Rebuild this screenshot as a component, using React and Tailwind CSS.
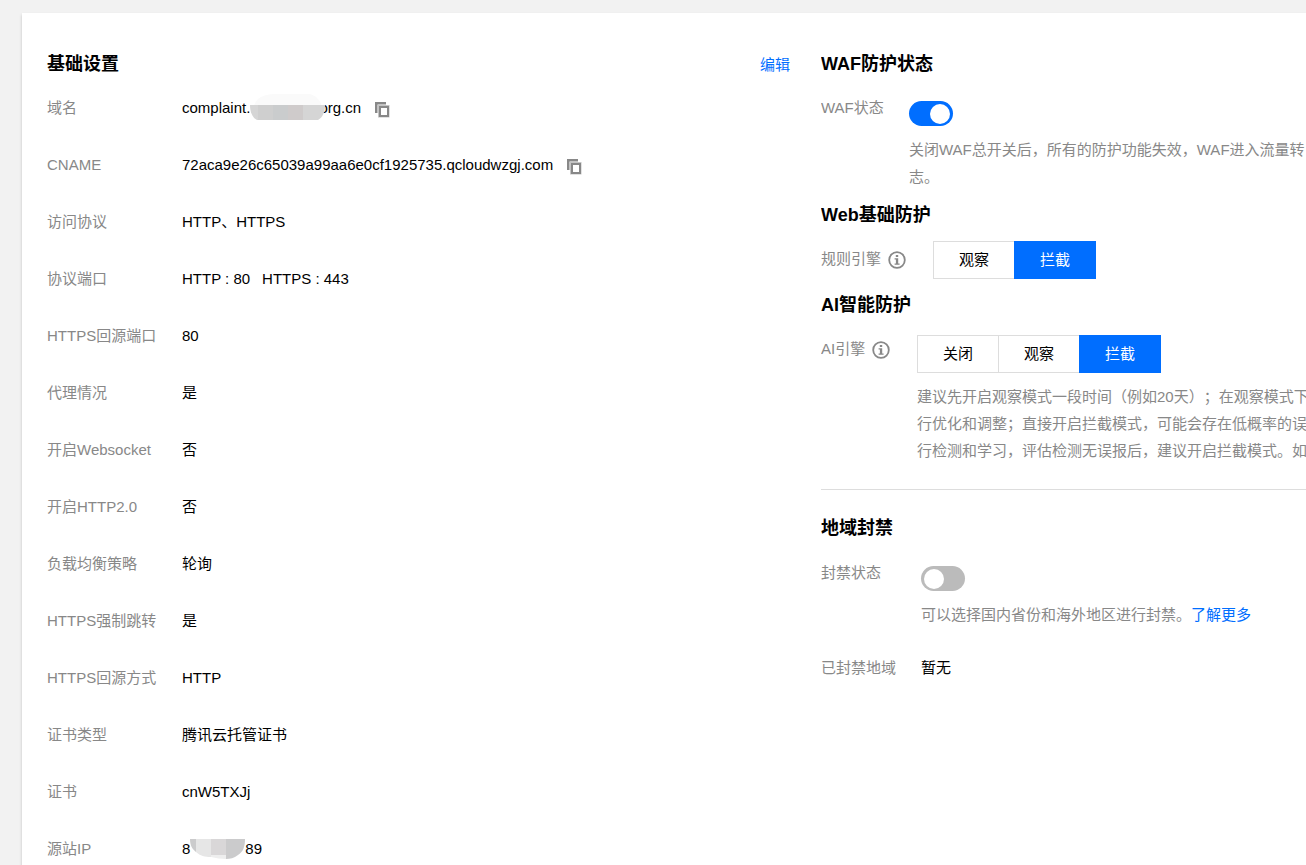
import React, { useState } from 'react';

const LINE = 'text-[15px] leading-[27px]';

function CopyIcon() {
  return (
    <svg width="15" height="16" viewBox="0 0 15 16" fill="none" aria-hidden="true">
      <path d="M0 0H11V2.5H2.5V11H0Z" fill="#888" />
      <path d="M3 3H14.5V15.5H3Z" fill="#c4c4c4" />
      <path d="M4 4H14V15H4Z" fill="#888" />
      <path d="M6 6H12V13H6Z" fill="#fff" />
    </svg>
  );
}

function InfoIcon() {
  return (
    <svg width="18" height="18" viewBox="0 0 18 18" fill="none" aria-hidden="true">
      <circle cx="9" cy="9" r="7.8" stroke="#888" strokeWidth="1.8" />
      <path d="M7.8 4H10.2V6H7.8Z" fill="#888" />
      <path d="M6.6 7.2H10.2V12.4H11.6V13.8H6.6V12.4H7.9V8.6H6.6Z" fill="#888" />
    </svg>
  );
}

function CopyButton({ label }) {
  return (
    <button type="button" aria-label={label} className="ml-[14px] mt-1 cursor-pointer">
      <CopyIcon />
    </button>
  );
}

// grey patch over the hidden part of the domain
function DomainMask() {
  return (
    <svg className="relative -mr-[6px] shrink-0" width="75" height="27" viewBox="0 0 75 27" aria-hidden="true">
      <path d="M4 12C6 4 12 1 23 0H60C67 2 70 7 72 12Z" fill="#fafafa" />
      <path d="M0 11H75C75 18 73 23 68 26H7C3 24 0 19 0 11Z" fill="#d5d5d5" />
      <path d="M8 11H23V26H8Z" fill="#cfcfcf" />
      <path d="M23 11H38V26H23Z" fill="#cacccd" />
      <path d="M38 11H53V26H38Z" fill="#cfcbcb" />
    </svg>
  );
}

function IpMask() {
  return (
    <svg className="shrink-0" width="55" height="20" viewBox="0 0 55 20" aria-hidden="true">
      <path d="M0 0H55C55 8 53 13 48 16C44 19 40 20 36 20V0H6V13C2 10 0 6 0 0Z" fill="#cbcbcc" />
      <path d="M6 0H21V18C15 18 10 17 6 13Z" fill="#e6e6e6" />
      <path d="M21 0H36V16H21Z" fill="#d9d7d8" />
      <path d="M21 16H36V20C31 20 26 19 21 18Z" fill="#eee" />
    </svg>
  );
}

const rows = [
  {
    label: '域名',
    value: (
      <>
        complaint.
        <DomainMask />
        org.cn
        <CopyButton label="复制域名" />
      </>
    ),
  },
  {
    label: 'CNAME',
    value: (
      <>
        72aca9e26c65039a99aa6e0cf1925735.qcloudwzgj.com
        <CopyButton label="复制 CNAME" />
      </>
    ),
  },
  { label: '访问协议', value: 'HTTP、HTTPS' },
  {
    label: '协议端口',
    value: (
      <>
        <span>HTTP : 80</span>
        <span className="ml-3">HTTPS : 443</span>
      </>
    ),
  },
  { label: 'HTTPS回源端口', value: '80' },
  { label: '代理情况', value: '是' },
  { label: '开启Websocket', value: '否' },
  { label: '开启HTTP2.0', value: '否' },
  { label: '负载均衡策略', value: '轮询' },
  { label: 'HTTPS强制跳转', value: '是' },
  { label: 'HTTPS回源方式', value: 'HTTP' },
  { label: '证书类型', value: '腾讯云托管证书' },
  { label: '证书', value: 'cnW5TXJj' },
  {
    label: '源站IP',
    value: (
      <>
        8<IpMask />
        89
      </>
    ),
  },
];

function Title({ children }) {
  return <h2 className="text-lg leading-[27px] font-bold text-black">{children}</h2>;
}

function Switch({ id, defaultChecked }) {
  return (
    <input
      id={id}
      type="checkbox"
      role="switch"
      defaultChecked={defaultChecked}
      className="block h-[25px] w-11 cursor-pointer appearance-none rounded-full bg-[#bbb] p-[3px] before:block before:size-5 before:rounded-full before:bg-white checked:bg-[#006eff] checked:before:ml-[18px]"
    />
  );
}

function Segment({ labelId, options, initial }) {
  const [active, setActive] = useState(initial);
  return (
    <div role="group" aria-labelledby={labelId} className="flex">
      {options.map((option) => (
        <button
          key={option}
          type="button"
          aria-pressed={option === active}
          onClick={() => setActive(option)}
          className={`-ml-px h-[38px] cursor-pointer border px-[25px] pb-[2px] text-[15px] first:ml-0 ${
            option === active
              ? 'relative border-[#006eff] bg-[#006eff] text-white'
              : 'border-[#ddd] bg-white text-black'
          }`}
        >
          {option}
        </button>
      ))}
    </div>
  );
}

export default function App() {
  return (
    <div className="flex min-h-screen overflow-hidden bg-[#f2f2f2] pt-[13px] pl-[22px] font-['Liberation_Sans','Noto_Sans_CJK_SC',sans-serif]">
      <main className="grid min-w-0 flex-1 grid-cols-[743fr_485fr] gap-x-[31px] bg-white pt-[38px] pl-[25px] shadow-[0_2px_3px_rgba(0,0,0,0.2)]">
        {/* basic settings */}
        <section className="min-w-0">
          <div className="mb-4 flex items-center justify-between">
            <Title>基础设置</Title>
            <a href="#edit" className={`${LINE} text-[#006eff]`}>
              编辑
            </a>
          </div>
          <dl className={`flex flex-col gap-[30px] ${LINE}`}>
            {rows.map((row) => (
              <div key={row.label} className="flex h-[27px]">
                <dt className="w-[135px] shrink-0 text-[#888]">{row.label}</dt>
                <dd className="flex items-center whitespace-nowrap text-black">{row.value}</dd>
              </div>
            ))}
          </dl>
        </section>

        {/* protection status */}
        <section className={`min-w-0 overflow-hidden whitespace-nowrap text-[#888] ${LINE}`}>
          <Title>WAF防护状态</Title>
          <div className="mt-4 flex">
            <label htmlFor="waf" className="w-[88px] shrink-0">
              WAF状态
            </label>
            <div className="pt-[7px]">
              <Switch id="waf" defaultChecked />
              <p className="mt-[10px]">
                关闭WAF总开关后，所有的防护功能失效，WAF进入流量转
                <br />
                志。
              </p>
            </div>
          </div>

          <div className="mt-3">
            <Title>Web基础防护</Title>
          </div>
          <div className="mt-3 flex">
            <div className="mt-1 flex h-[27px] w-28 shrink-0 items-center">
              <span id="rule-engine">规则引擎</span>
              <span className="mt-[2px] ml-[7px]">
                <InfoIcon />
              </span>
            </div>
            <Segment labelId="rule-engine" options={['观察', '拦截']} initial="拦截" />
          </div>

          <div className="mt-[13px]">
            <Title>AI智能防护</Title>
          </div>
          <div className="mt-4 flex">
            <div className="flex h-[27px] w-24 shrink-0 items-center">
              <span id="ai-engine">AI引擎</span>
              <span className="mt-[2px] ml-[7px]">
                <InfoIcon />
              </span>
            </div>
            <div>
              <Segment labelId="ai-engine" options={['关闭', '观察', '拦截']} initial="拦截" />
              <p className="mt-[10px] [text-spacing-trim:space-all]">
                建议先开启观察模式一段时间（例如20天）；在观察模式下
                <br />
                行优化和调整；直接开启拦截模式，可能会存在低概率的误
                <br />
                行检测和学习，评估检测无误报后，建议开启拦截模式。如
              </p>
            </div>
          </div>

          <hr className="mt-[25px] mb-[25px] border-[#ddd]" />

          <Title>地域封禁</Title>
          <div className="mt-[17px] flex">
            <label htmlFor="region" className="w-[100px] shrink-0">
              封禁状态
            </label>
            <div className="pt-[7px]">
              <Switch id="region" />
              <p className="mt-[10px]">
                可以选择国内省份和海外地区进行封禁。
                <a href="#more" className="text-[#006eff]">
                  了解更多
                </a>
              </p>
            </div>
          </div>
          <div className="mt-[26px] flex">
            <span className="w-[100px] shrink-0">已封禁地域</span>
            <span className="text-black">暂无</span>
          </div>
        </section>
      </main>
    </div>
  );
}
